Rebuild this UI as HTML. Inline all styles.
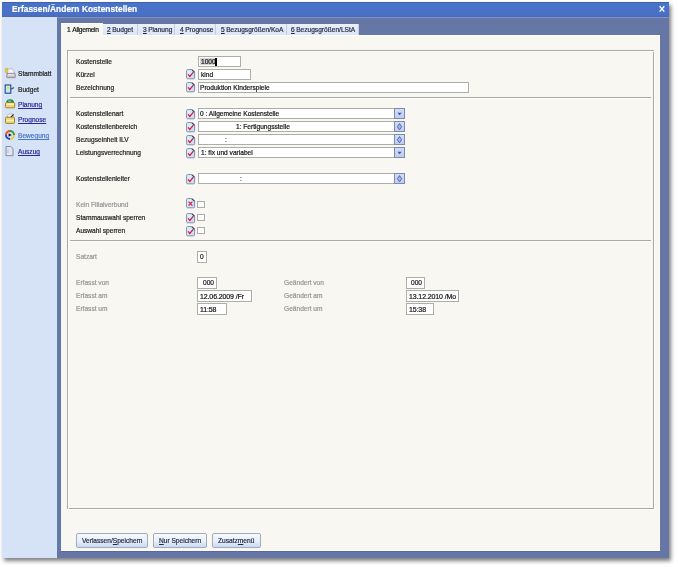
<!DOCTYPE html>
<html><head><meta charset="utf-8"><style>
html,body{margin:0;padding:0;}
body{width:678px;height:567px;position:relative;overflow:hidden;background:#ffffff;font-family:"Liberation Sans",sans-serif;}
.t{position:absolute;white-space:pre;line-height:1;will-change:transform;-webkit-text-stroke:0.2px currentColor;font-family:"Liberation Sans",sans-serif;}
u{text-decoration:underline;}
</style></head><body>
<div style="position:absolute;left:2px;top:2px;width:667px;height:556px;background:#6677a6;box-shadow:2px 3px 4px 0 rgba(0,0,0,0.5)"></div>
<div style="position:absolute;left:2px;top:2px;width:667px;height:15px;background:linear-gradient(#4874c8,#4a70c6 85%,#4668b8);border-top:1px solid #3f62b0;box-sizing:border-box"></div>
<div style="position:absolute;left:57px;top:17px;width:612px;height:1px;background:#7e93c8"></div>
<div class="t" style="left:11.50px;top:5.27px;font-size:8.35px;color:#ffffff;font-weight:bold;letter-spacing:0.05px;">Erfassen/&Auml;ndern Kostenstellen</div>
<svg style="position:absolute;left:658px;top:5px" width="8" height="8" viewBox="0 0 8 8"><path d="M1.6 1.3L6.3 6.6M6.3 1.3L1.6 6.6" stroke="#fff" stroke-width="1.35"/></svg>
<div style="position:absolute;left:2px;top:17px;width:55px;height:541px;background:#d6e2f5"></div>
<div style="position:absolute;left:61px;top:35px;width:599px;height:516px;background:#f8f7f2"></div>
<div style="position:absolute;left:61px;top:35px;width:599px;height:1px;background:#fdfdfb"></div>
<div style="position:absolute;left:61px;top:35px;width:1px;height:516px;background:#eef3fa"></div>
<div style="position:absolute;left:659px;top:35px;width:1px;height:516px;background:#fdfdfd"></div>
<div style="position:absolute;left:61px;top:550px;width:599px;height:1px;background:#fdfdfd"></div>
<div style="position:absolute;left:61px;top:551px;width:599px;height:1px;background:#56699a"></div>
<div style="position:absolute;left:61px;top:23px;width:42px;height:13px;background:#f8f7f2;border-top:1px solid #fdfdfb;box-sizing:border-box"></div>
<div class="t" style="left:66.60px;top:26.91px;font-size:6.6px;color:#141414;font-weight:normal;">1<span style="margin-left:1.7px;letter-spacing:-0.3px">Allgemein</span></div>
<div style="position:absolute;left:103px;top:24px;width:35px;height:11px;background:linear-gradient(#eaf0fa,#dce5f5);border-right:1px solid #c2cee4;box-sizing:border-box"></div>
<div class="t" style="left:107.40px;top:27.11px;font-size:6.6px;color:#1e2a44;font-weight:normal;"><u>2</u><span style="display:inline-block;width:1.5px"></span>Budget</div>
<div style="position:absolute;left:138px;top:24px;width:37px;height:11px;background:linear-gradient(#eaf0fa,#dce5f5);border-right:1px solid #c2cee4;box-sizing:border-box"></div>
<div class="t" style="left:143.20px;top:27.11px;font-size:6.6px;color:#1e2a44;font-weight:normal;"><u>3</u><span style="display:inline-block;width:1.5px"></span>Planung</div>
<div style="position:absolute;left:175px;top:24px;width:41px;height:11px;background:linear-gradient(#eaf0fa,#dce5f5);border-right:1px solid #c2cee4;box-sizing:border-box"></div>
<div class="t" style="left:179.50px;top:27.11px;font-size:6.6px;color:#1e2a44;font-weight:normal;"><u>4</u><span style="display:inline-block;width:1.5px"></span>Prognose</div>
<div style="position:absolute;left:216px;top:24px;width:70.5px;height:11px;background:linear-gradient(#eaf0fa,#dce5f5);border-right:1px solid #c2cee4;box-sizing:border-box"></div>
<div class="t" style="left:221.10px;top:27.11px;font-size:6.6px;color:#1e2a44;font-weight:normal;"><u>5</u><span style="display:inline-block;width:1.5px"></span>Bezugsgr&ouml;&szlig;en/KoA</div>
<div style="position:absolute;left:286.5px;top:24px;width:72.5px;height:11px;background:linear-gradient(#eaf0fa,#dce5f5);border-right:1px solid #c2cee4;box-sizing:border-box"></div>
<div class="t" style="left:290.80px;top:27.11px;font-size:6.6px;color:#1e2a44;font-weight:normal;"><u>6</u><span style="display:inline-block;width:1.5px"></span>Bezugsgr&ouml;&szlig;en/LStA</div>
<div style="position:absolute;left:67px;top:50px;width:587px;height:459px;border:1px solid #a9a9a4;box-sizing:border-box"></div>
<div style="position:absolute;left:68px;top:51px;width:587px;height:459px;border:1px solid #ffffff;border-right:1px solid #ffffff;box-sizing:border-box;border-left-color:#fff"></div>
<div style="position:absolute;left:70px;top:97px;width:581px;height:1px;background:#a9a9a4"></div>
<div style="position:absolute;left:70px;top:98px;width:581px;height:1px;background:#ffffff"></div>
<div style="position:absolute;left:70px;top:240px;width:581px;height:1px;background:#a9a9a4"></div>
<div style="position:absolute;left:70px;top:241px;width:581px;height:1px;background:#ffffff"></div>
<div class="t" style="left:76.00px;top:59.21px;font-size:6.6px;color:#1e1e1e;font-weight:normal;">Kostenstelle</div>
<div class="t" style="left:76.00px;top:72.31px;font-size:6.6px;color:#1e1e1e;font-weight:normal;">K&uuml;rzel</div>
<div class="t" style="left:76.00px;top:85.31px;font-size:6.6px;color:#1e1e1e;font-weight:normal;">Bezeichnung</div>
<div class="t" style="left:76.00px;top:111.31px;font-size:6.6px;color:#1e1e1e;font-weight:normal;">Kostenstellenart</div>
<div class="t" style="left:76.00px;top:124.31px;font-size:6.6px;color:#1e1e1e;font-weight:normal;">Kostenstellenbereich</div>
<div class="t" style="left:76.00px;top:137.31px;font-size:6.6px;color:#1e1e1e;font-weight:normal;">Bezugseinheit ILV</div>
<div class="t" style="left:76.00px;top:150.11px;font-size:6.6px;color:#1e1e1e;font-weight:normal;">Leistungsverrechnung</div>
<div class="t" style="left:76.00px;top:176.31px;font-size:6.6px;color:#1e1e1e;font-weight:normal;">Kostenstellenleiter</div>
<div class="t" style="left:76.00px;top:201.61px;font-size:6.6px;color:#969696;font-weight:normal;">Kein Filialverbund</div>
<div class="t" style="left:76.00px;top:214.51px;font-size:6.6px;color:#1e1e1e;font-weight:normal;">Stammauswahl sperren</div>
<div class="t" style="left:76.00px;top:227.91px;font-size:6.6px;color:#1e1e1e;font-weight:normal;">Auswahl sperren</div>
<div class="t" style="left:76.00px;top:253.61px;font-size:6.6px;color:#969696;font-weight:normal;">Satzart</div>
<div class="t" style="left:76.00px;top:279.61px;font-size:6.6px;color:#969696;font-weight:normal;">Erfasst von</div>
<div class="t" style="left:76.00px;top:292.91px;font-size:6.6px;color:#969696;font-weight:normal;">Erfasst am</div>
<div class="t" style="left:76.00px;top:306.21px;font-size:6.6px;color:#969696;font-weight:normal;">Erfasst um</div>
<div class="t" style="left:284.20px;top:279.61px;font-size:6.6px;color:#969696;font-weight:normal;">Ge&auml;ndert von</div>
<div class="t" style="left:284.20px;top:292.91px;font-size:6.6px;color:#969696;font-weight:normal;">Ge&auml;ndert am</div>
<div class="t" style="left:284.20px;top:306.21px;font-size:6.6px;color:#969696;font-weight:normal;">Ge&auml;ndert um</div>
<div style="position:absolute;left:198px;top:56px;width:43px;height:11px;background:#fff;border:1px solid #adadaa;box-sizing:border-box;"></div>
<div style="position:absolute;left:199.5px;top:58px;width:15px;height:7px;background:#d4d4d4"></div>
<div class="t" style="left:200.50px;top:59.21px;font-size:6.6px;color:#141414;font-weight:normal;">1000</div>
<div style="position:absolute;left:215px;top:57.5px;width:1.6px;height:8px;background:#000"></div>
<div style="position:absolute;left:198px;top:69px;width:53px;height:11px;background:#fff;border:1px solid #adadaa;box-sizing:border-box;"></div>
<div class="t" style="left:200.50px;top:71.81px;font-size:6.6px;color:#141414;font-weight:normal;">kind</div>
<div style="position:absolute;left:198px;top:82px;width:271px;height:11px;background:#fff;border:1px solid #adadaa;box-sizing:border-box;"></div>
<div class="t" style="left:199.80px;top:84.81px;font-size:6.6px;color:#141414;font-weight:normal;">Produktion Kinderspiele</div>
<div style="position:absolute;left:198px;top:108px;width:207px;height:11px;background:#fff;border:1px solid #adadaa;box-sizing:border-box;"></div>
<div class="t" style="left:200.20px;top:110.71px;font-size:6.6px;color:#141414;font-weight:normal;">0 : Allgemeine Kostenstelle</div>
<div style="position:absolute;left:394px;top:108px;width:11px;height:11px;background:linear-gradient(#d2dcfa,#bfcdf5);border:1px solid #7d8aa8;box-sizing:border-box"></div>
<svg style="position:absolute;left:394px;top:108px" width="11" height="11" viewBox="0 0 11 11"><path d="M3.5 4.8h4.2L5.6 7.2z" fill="#3d4f8a"/></svg>
<div style="position:absolute;left:198px;top:121px;width:207px;height:11px;background:#fff;border:1px solid #adadaa;box-sizing:border-box;"></div>
<div class="t" style="left:236.00px;top:123.71px;font-size:6.6px;color:#141414;font-weight:normal;">1: Fertigungsstelle</div>
<div style="position:absolute;left:394px;top:121px;width:11px;height:11px;background:linear-gradient(#d2dcfa,#bfcdf5);border:1px solid #7d8aa8;box-sizing:border-box"></div>
<svg style="position:absolute;left:394px;top:121px" width="11" height="11" viewBox="0 0 11 11"><path d="M5.5 2.6L7.6 5.7 5.5 8.8 3.4 5.7z" fill="#a8b8ee" stroke="#4a5c94" stroke-width="0.9"/></svg>
<div style="position:absolute;left:198px;top:134px;width:207px;height:11px;background:#fff;border:1px solid #adadaa;box-sizing:border-box;"></div>
<div class="t" style="left:224.80px;top:136.71px;font-size:6.6px;color:#141414;font-weight:normal;">:</div>
<div style="position:absolute;left:394px;top:134px;width:11px;height:11px;background:linear-gradient(#d2dcfa,#bfcdf5);border:1px solid #7d8aa8;box-sizing:border-box"></div>
<svg style="position:absolute;left:394px;top:134px" width="11" height="11" viewBox="0 0 11 11"><path d="M5.5 2.6L7.6 5.7 5.5 8.8 3.4 5.7z" fill="#a8b8ee" stroke="#4a5c94" stroke-width="0.9"/></svg>
<div style="position:absolute;left:198px;top:147px;width:207px;height:11px;background:#fff;border:1px solid #adadaa;box-sizing:border-box;"></div>
<div class="t" style="left:200.60px;top:149.71px;font-size:6.6px;color:#141414;font-weight:normal;">1: fix und variabel</div>
<div style="position:absolute;left:394px;top:147px;width:11px;height:11px;background:linear-gradient(#d2dcfa,#bfcdf5);border:1px solid #7d8aa8;box-sizing:border-box"></div>
<svg style="position:absolute;left:394px;top:147px" width="11" height="11" viewBox="0 0 11 11"><path d="M3.5 4.8h4.2L5.6 7.2z" fill="#3d4f8a"/></svg>
<div style="position:absolute;left:198px;top:173px;width:207px;height:11px;background:#fff;border:1px solid #adadaa;box-sizing:border-box;"></div>
<div class="t" style="left:239.80px;top:175.71px;font-size:6.6px;color:#141414;font-weight:normal;">:</div>
<div style="position:absolute;left:394px;top:173px;width:11px;height:11px;background:linear-gradient(#d2dcfa,#bfcdf5);border:1px solid #7d8aa8;box-sizing:border-box"></div>
<svg style="position:absolute;left:394px;top:173px" width="11" height="11" viewBox="0 0 11 11"><path d="M5.5 2.6L7.6 5.7 5.5 8.8 3.4 5.7z" fill="#a8b8ee" stroke="#4a5c94" stroke-width="0.9"/></svg>
<div style="position:absolute;left:197px;top:251px;width:10px;height:12px;background:#fff;border:1px solid #adadaa;box-sizing:border-box;"></div>
<div class="t" style="left:199.80px;top:254.31px;font-size:6.6px;color:#141414;font-weight:normal;">0</div>
<div style="position:absolute;left:197px;top:277px;width:20px;height:12px;background:#fff;border:1px solid #adadaa;box-sizing:border-box;"></div>
<div class="t" style="left:202.50px;top:280.01px;font-size:6.6px;color:#141414;font-weight:normal;">000</div>
<div style="position:absolute;left:197px;top:290px;width:55px;height:12px;background:#fff;border:1px solid #adadaa;box-sizing:border-box;"></div>
<div class="t" style="left:200.00px;top:292.83px;font-size:7px;color:#141414;font-weight:normal;letter-spacing:-0.12px;">12.06.2009 /Fr</div>
<div style="position:absolute;left:197px;top:303px;width:30px;height:12px;background:#fff;border:1px solid #adadaa;box-sizing:border-box;"></div>
<div class="t" style="left:200.00px;top:305.83px;font-size:7px;color:#141414;font-weight:normal;letter-spacing:-0.12px;">11:58</div>
<div style="position:absolute;left:406px;top:277px;width:19px;height:12px;background:#fff;border:1px solid #adadaa;box-sizing:border-box;"></div>
<div class="t" style="left:411.00px;top:280.01px;font-size:6.6px;color:#141414;font-weight:normal;">000</div>
<div style="position:absolute;left:406px;top:290px;width:53px;height:12px;background:#fff;border:1px solid #adadaa;box-sizing:border-box;"></div>
<div class="t" style="left:408.50px;top:292.83px;font-size:7px;color:#141414;font-weight:normal;letter-spacing:-0.12px;">13.12.2010 /Mo</div>
<div style="position:absolute;left:406px;top:303px;width:28px;height:12px;background:#fff;border:1px solid #adadaa;box-sizing:border-box;"></div>
<div class="t" style="left:408.50px;top:305.83px;font-size:7px;color:#141414;font-weight:normal;letter-spacing:-0.12px;">15:38</div>
<svg style="position:absolute;left:186px;top:69.3px" width="10" height="11" viewBox="0 0 10 11"><defs><linearGradient id="g186_693" x1="0" y1="0" x2="1" y2="1"><stop offset="0" stop-color="#eef4fb"/><stop offset="1" stop-color="#c4d8ee"/></linearGradient></defs><path d="M0.6 1.6Q0.6 0.6 1.6 0.6H6.2L8.6 3V8.8Q8.6 9.8 7.6 9.8H1.6Q0.6 9.8 0.6 8.8Z" fill="url(#g186_693)" stroke="#7f8eb4" stroke-width="1"/><path d="M6 0.8L8.4 3.2" stroke="#2c5070" stroke-width="1.1"/><path d="M2.1 5.4L3.8 7.4L7.4 3.2" fill="none" stroke="#d0203a" stroke-width="1.3"/></svg>
<svg style="position:absolute;left:186px;top:82.3px" width="10" height="11" viewBox="0 0 10 11"><defs><linearGradient id="g186_823" x1="0" y1="0" x2="1" y2="1"><stop offset="0" stop-color="#eef4fb"/><stop offset="1" stop-color="#c4d8ee"/></linearGradient></defs><path d="M0.6 1.6Q0.6 0.6 1.6 0.6H6.2L8.6 3V8.8Q8.6 9.8 7.6 9.8H1.6Q0.6 9.8 0.6 8.8Z" fill="url(#g186_823)" stroke="#7f8eb4" stroke-width="1"/><path d="M6 0.8L8.4 3.2" stroke="#2c5070" stroke-width="1.1"/><path d="M2.1 5.4L3.8 7.4L7.4 3.2" fill="none" stroke="#d0203a" stroke-width="1.3"/></svg>
<svg style="position:absolute;left:186px;top:108.5px" width="10" height="11" viewBox="0 0 10 11"><defs><linearGradient id="g186_1085" x1="0" y1="0" x2="1" y2="1"><stop offset="0" stop-color="#eef4fb"/><stop offset="1" stop-color="#c4d8ee"/></linearGradient></defs><path d="M0.6 1.6Q0.6 0.6 1.6 0.6H6.2L8.6 3V8.8Q8.6 9.8 7.6 9.8H1.6Q0.6 9.8 0.6 8.8Z" fill="url(#g186_1085)" stroke="#7f8eb4" stroke-width="1"/><path d="M6 0.8L8.4 3.2" stroke="#2c5070" stroke-width="1.1"/><path d="M2.1 5.4L3.8 7.4L7.4 3.2" fill="none" stroke="#d0203a" stroke-width="1.3"/></svg>
<svg style="position:absolute;left:186px;top:121.5px" width="10" height="11" viewBox="0 0 10 11"><defs><linearGradient id="g186_1215" x1="0" y1="0" x2="1" y2="1"><stop offset="0" stop-color="#eef4fb"/><stop offset="1" stop-color="#c4d8ee"/></linearGradient></defs><path d="M0.6 1.6Q0.6 0.6 1.6 0.6H6.2L8.6 3V8.8Q8.6 9.8 7.6 9.8H1.6Q0.6 9.8 0.6 8.8Z" fill="url(#g186_1215)" stroke="#7f8eb4" stroke-width="1"/><path d="M6 0.8L8.4 3.2" stroke="#2c5070" stroke-width="1.1"/><path d="M2.1 5.4L3.8 7.4L7.4 3.2" fill="none" stroke="#d0203a" stroke-width="1.3"/></svg>
<svg style="position:absolute;left:186px;top:134.5px" width="10" height="11" viewBox="0 0 10 11"><defs><linearGradient id="g186_1345" x1="0" y1="0" x2="1" y2="1"><stop offset="0" stop-color="#eef4fb"/><stop offset="1" stop-color="#c4d8ee"/></linearGradient></defs><path d="M0.6 1.6Q0.6 0.6 1.6 0.6H6.2L8.6 3V8.8Q8.6 9.8 7.6 9.8H1.6Q0.6 9.8 0.6 8.8Z" fill="url(#g186_1345)" stroke="#7f8eb4" stroke-width="1"/><path d="M6 0.8L8.4 3.2" stroke="#2c5070" stroke-width="1.1"/><path d="M2.1 5.4L3.8 7.4L7.4 3.2" fill="none" stroke="#d0203a" stroke-width="1.3"/></svg>
<svg style="position:absolute;left:186px;top:147.5px" width="10" height="11" viewBox="0 0 10 11"><defs><linearGradient id="g186_1475" x1="0" y1="0" x2="1" y2="1"><stop offset="0" stop-color="#eef4fb"/><stop offset="1" stop-color="#c4d8ee"/></linearGradient></defs><path d="M0.6 1.6Q0.6 0.6 1.6 0.6H6.2L8.6 3V8.8Q8.6 9.8 7.6 9.8H1.6Q0.6 9.8 0.6 8.8Z" fill="url(#g186_1475)" stroke="#7f8eb4" stroke-width="1"/><path d="M6 0.8L8.4 3.2" stroke="#2c5070" stroke-width="1.1"/><path d="M2.1 5.4L3.8 7.4L7.4 3.2" fill="none" stroke="#d0203a" stroke-width="1.3"/></svg>
<svg style="position:absolute;left:186px;top:173.5px" width="10" height="11" viewBox="0 0 10 11"><defs><linearGradient id="g186_1735" x1="0" y1="0" x2="1" y2="1"><stop offset="0" stop-color="#eef4fb"/><stop offset="1" stop-color="#c4d8ee"/></linearGradient></defs><path d="M0.6 1.6Q0.6 0.6 1.6 0.6H6.2L8.6 3V8.8Q8.6 9.8 7.6 9.8H1.6Q0.6 9.8 0.6 8.8Z" fill="url(#g186_1735)" stroke="#7f8eb4" stroke-width="1"/><path d="M6 0.8L8.4 3.2" stroke="#2c5070" stroke-width="1.1"/><path d="M2.1 5.4L3.8 7.4L7.4 3.2" fill="none" stroke="#d0203a" stroke-width="1.3"/></svg>
<svg style="position:absolute;left:186px;top:198px" width="10" height="11" viewBox="0 0 10 11"><defs><linearGradient id="g186_1980" x1="0" y1="0" x2="1" y2="1"><stop offset="0" stop-color="#eef4fb"/><stop offset="1" stop-color="#c4d8ee"/></linearGradient></defs><path d="M0.6 1.6Q0.6 0.6 1.6 0.6H6.2L8.6 3V8.8Q8.6 9.8 7.6 9.8H1.6Q0.6 9.8 0.6 8.8Z" fill="url(#g186_1980)" stroke="#7f8eb4" stroke-width="1"/><path d="M6 0.8L8.4 3.2" stroke="#2c5070" stroke-width="1.1"/><path d="M2.6 3.6L6.4 7.6M6.4 3.6L2.6 7.6" stroke="#d8283a" stroke-width="1.3"/></svg>
<svg style="position:absolute;left:186px;top:213px" width="10" height="11" viewBox="0 0 10 11"><defs><linearGradient id="g186_2130" x1="0" y1="0" x2="1" y2="1"><stop offset="0" stop-color="#eef4fb"/><stop offset="1" stop-color="#c4d8ee"/></linearGradient></defs><path d="M0.6 1.6Q0.6 0.6 1.6 0.6H6.2L8.6 3V8.8Q8.6 9.8 7.6 9.8H1.6Q0.6 9.8 0.6 8.8Z" fill="url(#g186_2130)" stroke="#7f8eb4" stroke-width="1"/><path d="M6 0.8L8.4 3.2" stroke="#2c5070" stroke-width="1.1"/><path d="M2.1 5.4L3.8 7.4L7.4 3.2" fill="none" stroke="#d0203a" stroke-width="1.3"/></svg>
<svg style="position:absolute;left:186px;top:226px" width="10" height="11" viewBox="0 0 10 11"><defs><linearGradient id="g186_2260" x1="0" y1="0" x2="1" y2="1"><stop offset="0" stop-color="#eef4fb"/><stop offset="1" stop-color="#c4d8ee"/></linearGradient></defs><path d="M0.6 1.6Q0.6 0.6 1.6 0.6H6.2L8.6 3V8.8Q8.6 9.8 7.6 9.8H1.6Q0.6 9.8 0.6 8.8Z" fill="url(#g186_2260)" stroke="#7f8eb4" stroke-width="1"/><path d="M6 0.8L8.4 3.2" stroke="#2c5070" stroke-width="1.1"/><path d="M2.1 5.4L3.8 7.4L7.4 3.2" fill="none" stroke="#d0203a" stroke-width="1.3"/></svg>
<div style="position:absolute;left:197px;top:201px;width:8px;height:7px;background:#fbfbfb;border:1px solid #acacac;box-sizing:border-box"></div>
<div style="position:absolute;left:197px;top:214px;width:8px;height:7px;background:#fbfbfb;border:1px solid #acacac;box-sizing:border-box"></div>
<div style="position:absolute;left:197px;top:227px;width:8px;height:7px;background:#fbfbfb;border:1px solid #acacac;box-sizing:border-box"></div>
<div class="t" style="left:18.40px;top:71.21px;font-size:6.6px;color:#1e1e1e;font-weight:normal;">Stammblatt</div>
<div class="t" style="left:18.40px;top:87.31px;font-size:6.6px;color:#1e1e1e;font-weight:normal;">Budget</div>
<div class="t" style="left:18.40px;top:101.91px;font-size:6.6px;color:#2a2a9a;font-weight:normal;text-decoration:underline;">Planung</div>
<div class="t" style="left:18.40px;top:117.21px;font-size:6.6px;color:#2a2a9a;font-weight:normal;text-decoration:underline;">Prognose</div>
<div class="t" style="left:18.40px;top:132.91px;font-size:6.6px;color:#4a78c8;font-weight:normal;text-decoration:underline;">Bewegung</div>
<div class="t" style="left:18.40px;top:148.51px;font-size:6.6px;color:#2a2a9a;font-weight:normal;text-decoration:underline;">Auszug</div>
<svg style="position:absolute;left:0px;top:60px" width="20" height="100" viewBox="0 60 20 100"><path d="M7.6 68.8h4.6l2 2.6v3h-6.6z" fill="#f6f6f8" stroke="#a0a0b0" stroke-width="0.6"/><path d="M7 73.3h8l0.4 3.6a0.8 0.8 0 0 1-0.8 0.8h-7.2a0.8 0.8 0 0 1-0.8-0.8z" fill="#c8bcc8" stroke="#6e6676" stroke-width="0.6"/><rect x="8" y="74.2" width="6.2" height="1.4" fill="#f0e4ee"/><rect x="5.2" y="68.3" width="2.7" height="4.2" rx="0.8" fill="#e6cc44" stroke="#b09a30" stroke-width="0.4"/><rect x="5.2" y="85" width="5.6" height="8.2" fill="#bfe8f0" stroke="#24488e" stroke-width="1.1"/><rect x="6.2" y="87" width="3.5" height="2.2" fill="#e8d890"/><path d="M11 89.2l3-1.6" stroke="#404868" stroke-width="1.1"/><ellipse cx="10.1" cy="102.3" rx="3.8" ry="3" fill="#1f8a52"/><ellipse cx="9.6" cy="101.2" rx="1.6" ry="0.9" fill="#6cc090"/><rect x="5.5" y="102.6" width="9.2" height="5.2" rx="1" fill="#f0d868" stroke="#8a6a28" stroke-width="0.8"/><rect x="6.4" y="103.4" width="7.4" height="1.5" fill="#fbf2b8"/><path d="M7.6 118.5v-3.2l1.4-1.3h4l0.6 4.5z" fill="#f8f8f8" stroke="#9a9aa0" stroke-width="0.6"/><path d="M10.3 117.6l3.2-3.1" stroke="#2a2a30" stroke-width="1.1"/><rect x="5.5" y="117.2" width="9" height="6.2" rx="1" fill="#f0d868" stroke="#8a6a28" stroke-width="0.8"/><rect x="6.4" y="119.8" width="7.2" height="1.3" fill="#fbf2b8"/><path d="M10 131 A4 4 0 0 0 6 135" fill="none" stroke="#e05030" stroke-width="2"/><path d="M14 135 A4 4 0 0 0 10 131" fill="none" stroke="#3a9a3a" stroke-width="2"/><path d="M10 139 A4 4 0 0 0 14 135" fill="none" stroke="#e8c840" stroke-width="2"/><path d="M6 135 A4 4 0 0 0 10 139" fill="none" stroke="#2050b0" stroke-width="2"/><path d="M8.6 133.2l3.2 1.8-3.2 1.8z" fill="#101010"/><path d="M6 146.5h4.8l2.2 2.2v7h-7z" fill="#dfe6f2" stroke="#7c8496" stroke-width="0.9"/><path d="M8 149.5v3.5" stroke="#b0b8c8" stroke-width="0.8"/></svg>
<div style="position:absolute;left:76px;top:533px;width:72px;height:15px;background:linear-gradient(#f6f9fd 0%,#e8eff9 55%,#c9d8f1 100%);border:1px solid #a2abbd;border-radius:2px;box-sizing:border-box"></div>
<div class="t" style="left:81.50px;top:538.21px;font-size:6.6px;color:#1e2a44;font-weight:normal;">Verlassen/<u>S</u>peichern</div>
<div style="position:absolute;left:153px;top:533px;width:54px;height:15px;background:linear-gradient(#f6f9fd 0%,#e8eff9 55%,#c9d8f1 100%);border:1px solid #a2abbd;border-radius:2px;box-sizing:border-box"></div>
<div class="t" style="left:158.80px;top:538.21px;font-size:6.6px;color:#1e2a44;font-weight:normal;"><u>N</u>ur Speichern</div>
<div style="position:absolute;left:212px;top:533px;width:48.5px;height:15px;background:linear-gradient(#f6f9fd 0%,#e8eff9 55%,#c9d8f1 100%);border:1px solid #a2abbd;border-radius:2px;box-sizing:border-box"></div>
<div class="t" style="left:217.60px;top:538.21px;font-size:6.6px;color:#1e2a44;font-weight:normal;">Zusatz<u>m</u>en&uuml;</div>
</body></html>
